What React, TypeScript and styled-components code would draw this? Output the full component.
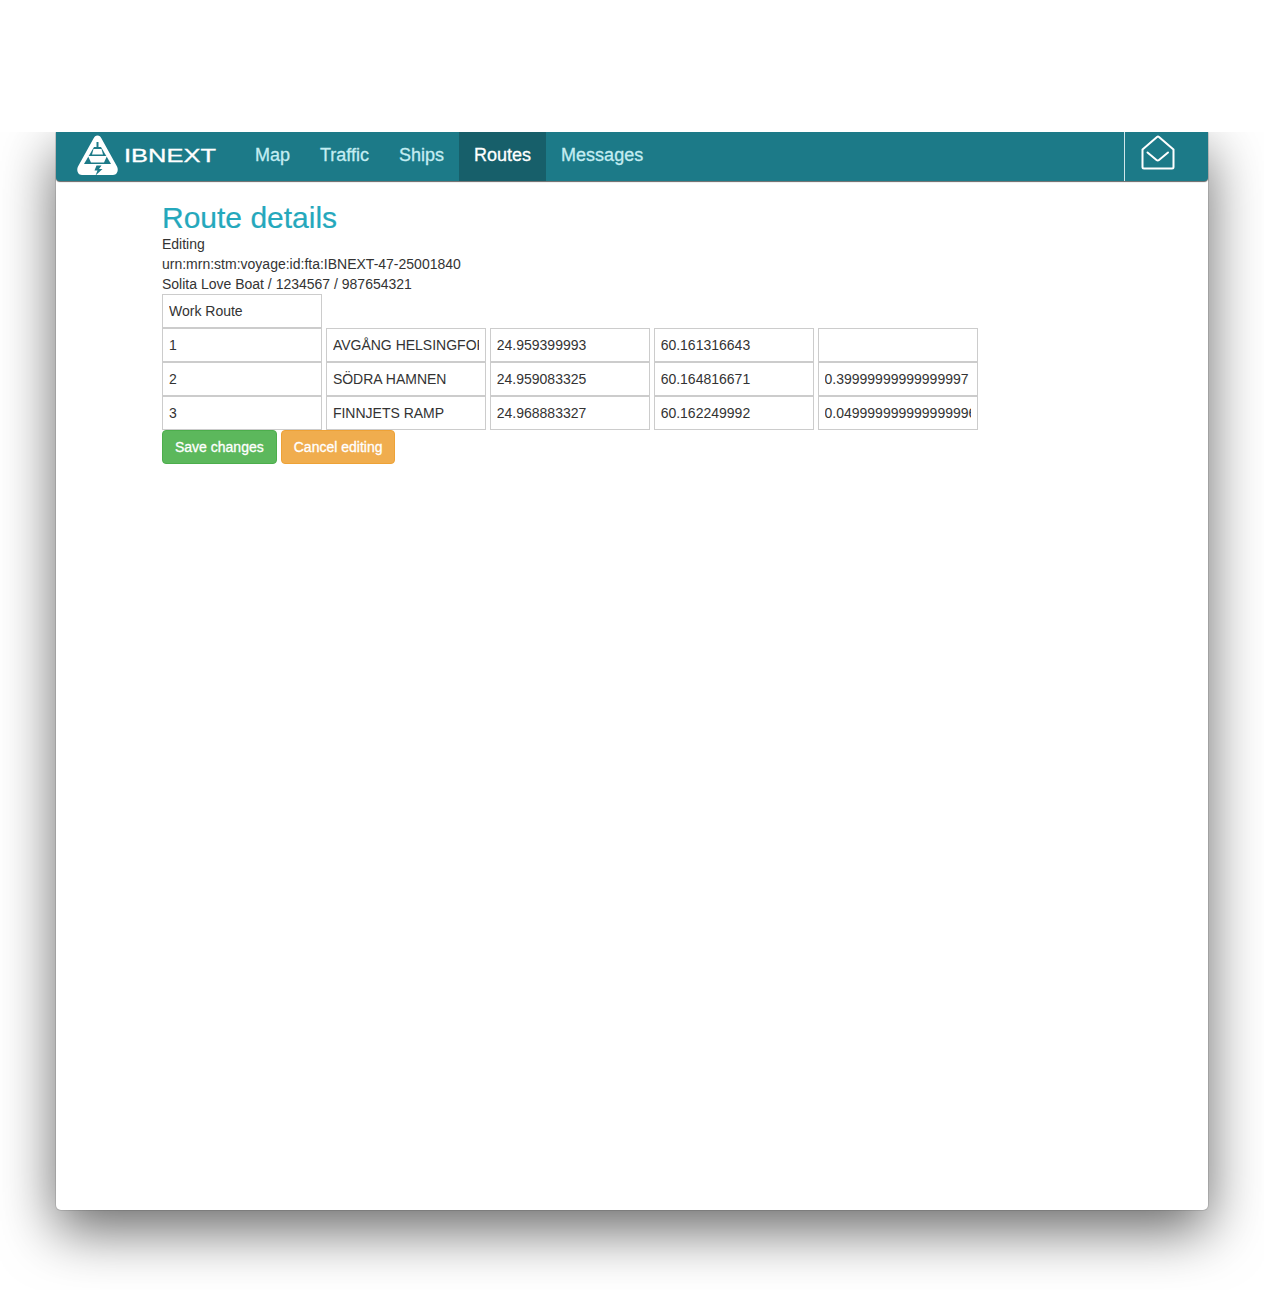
import React from 'react'
import styled, { createGlobalStyle } from 'styled-components'

const GlobalStyle = createGlobalStyle`
  html, body {
    margin: 0;
    padding: 0;
    background: #fff;
  }

  body {
    font-family: "Liberation Sans", Arial, sans-serif;
    font-size: 14px;
    line-height: 20px;
    color: #333;
  }
`

const Page = styled.div`
  height: 1290px;
  padding-top: 132px;
  box-sizing: border-box;
`

const ShadowClip = styled.div`
  height: 1158px;
  padding: 0 56px;
  overflow: hidden;
`

const Window = styled.div`
  height: 1078px;
  background: #fff;
  border-radius: 0 0 5px 5px;
  box-shadow: 0 20px 56px rgba(0, 0, 0, 0.6), 0 0 0 1px rgba(0, 0, 0, 0.1);
`

const Navbar = styled.nav`
  display: flex;
  align-items: stretch;
  height: 49px;
  background: #1c7a88;
  border-radius: 0 0 4px 4px;
  box-shadow: 0 1px 1px rgba(0, 0, 0, 0.6);
`

const Brand = styled.div`
  display: flex;
  align-items: center;
  width: 184px;
  padding: 0 0 2px 21px;
  box-sizing: border-box;
`

const BrandName = styled.span`
  display: inline-block;
  margin-left: 6px;
  font-size: 19px;
  color: #fff;
  -webkit-text-stroke: 0.3px #fff;
  transform: scaleX(1.34);
  transform-origin: left center;
`

const NavLinks = styled.ul`
  display: flex;
  flex: 1;
  margin: 0;
  padding: 0;
  list-style: none;
`

const NavLink = styled.li<{ $active?: boolean }>`
  padding: 13px 15px 0;
  font-size: 18px;
  line-height: 20px;
  color: ${({ $active }) => ($active ? '#fff' : '#c4edf2')};
  background: ${({ $active }) => ($active ? '#175f6a' : 'transparent')};
  -webkit-text-stroke: 0.3px currentColor;
`

const InboxButton = styled.div`
  width: 84px;
  padding: 3px 0 0 16px;
  box-sizing: border-box;
  border-left: 1px solid #cfe6ea;
`

const Content = styled.main`
  padding: 20px 0 0 106px;
`

const Title = styled.h1`
  margin: 0;
  font-size: 30px;
  font-weight: 400;
  line-height: 33px;
  color: #25a8bc;
  -webkit-text-stroke: 0.2px #25a8bc;
`

const Rows = styled.div`
  display: flex;
  flex-direction: column;
`

const Row = styled.div`
  display: flex;
  gap: 3.89px;
`

const Cell = styled.input`
  width: 160px;
  height: 34px;
  padding: 6px;
  box-sizing: border-box;
  border: 1px solid #ccc;
  border-radius: 0;
  outline: none;
  background: #fff;
  font-family: inherit;
  font-size: 14px;
  line-height: 20px;
  color: #333;
`

const Actions = styled.div`
  display: flex;
  gap: 4px;
`

const Button = styled.button<{ $kind: 'success' | 'warning' }>`
  height: 34px;
  padding: 0 12px;
  border: 1px solid ${({ $kind }) => ($kind === 'success' ? '#4cae4c' : '#eea236')};
  border-radius: 4px;
  background: ${({ $kind }) => ($kind === 'success' ? '#5cb85c' : '#f0ad4e')};
  font-family: inherit;
  font-size: 14px;
  line-height: 20px;
  color: #fff;
  -webkit-text-stroke: 0.3px #fff;
`

const waypoints = [
  ['1', 'AVGÅNG HELSINGFORS', '24.959399993', '60.161316643', ''],
  ['2', 'SÖDRA HAMNEN', '24.959083325', '60.164816671', '0.39999999999999997'],
  ['3', 'FINNJETS RAMP', '24.968883327', '60.162249992', '0.049999999999999996'],
]

const Logo = () => (
  <svg width="41" height="41" viewBox="0 0 41 41">
    <path
      d="M20.500 0.500c2 0 3 1.200 4 3L40 31.500c1.500 2.500 1 8.500-4 8.500H5c-5 0-5.500-6-4-8.500L16.500 3.500c1-1.800 2-3 4-3z"
      fill="#fff"
    />
    <path d="M17 12h7l10 17H7z" fill="#1c7a88" />
    <path d="M19.500 7h2v6h-2z" fill="#1c7a88" />
    <path d="M16.500 14h8l1.500 5.500H15z" fill="#fff" />
    <path d="M11 21h19l-3 6.500H14z" fill="#fff" />
    <path d="M19.500 30.500h5L22 34h3.500l-7 6.500 2-5h-3z" fill="#1c7a88" />
  </svg>
)

const InboxIcon = () => (
  <svg width="34" height="36" viewBox="0 0 34 36" fill="none" stroke="#fff" strokeWidth="2" strokeLinecap="round" strokeLinejoin="round">
    <path d="M1.500 14.500L16 2a1.500 1.500 0 0 1 2 0l14.500 12.500V32a1.500 1.500 0 0 1-1.500 1.500H3A1.500 1.500 0 0 1 1.500 32z" />
    <path d="M6.500 17.500l9 7.500a2 2 0 0 0 2.500 0l9-7.500" />
  </svg>
)

const App = () => {
  return (
    <Page>
      <GlobalStyle />
      <ShadowClip>
        <Window>
          <Navbar>
            <Brand>
              <Logo />
              <BrandName>IBNEXT</BrandName>
            </Brand>
            <NavLinks>
              <NavLink>Map</NavLink>
              <NavLink>Traffic</NavLink>
              <NavLink>Ships</NavLink>
              <NavLink $active>Routes</NavLink>
              <NavLink>Messages</NavLink>
            </NavLinks>
            <InboxButton>
              <InboxIcon />
            </InboxButton>
          </Navbar>
          <Content>
            <Title>Route details</Title>
            <div>Editing</div>
            <div>urn:mrn:stm:voyage:id:fta:IBNEXT-47-25001840</div>
            <div>Solita Love Boat / 1234567 / 987654321</div>
            <Rows>
              <Row>
                <Cell readOnly value="Work Route" />
              </Row>
              {waypoints.map(row => (
                <Row key={row[0]}>
                  {row.map((value, i) => (
                    <Cell key={i} readOnly value={value} />
                  ))}
                </Row>
              ))}
            </Rows>
            <Actions>
              <Button $kind="success">Save changes</Button>
              <Button $kind="warning">Cancel editing</Button>
            </Actions>
          </Content>
        </Window>
      </ShadowClip>
    </Page>
  )
}

export default App
